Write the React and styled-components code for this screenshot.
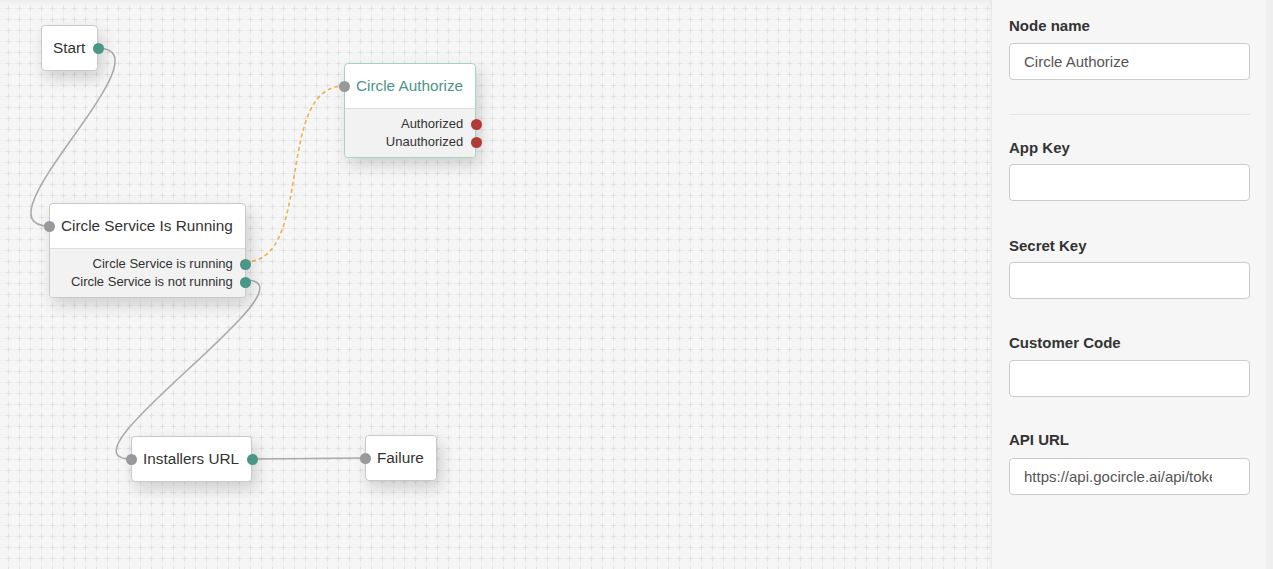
import React from 'react'
import styled, { createGlobalStyle } from 'styled-components'

const GlobalStyle = createGlobalStyle`
  html, body {
    margin: 0;
    padding: 0;
    height: 100%;
    overflow: hidden;
  }
  body {
    font-family: "Liberation Sans", Arial, sans-serif;
    color: #333;
  }
`

const Layout = styled.div`
  display: flex;
  width: 100vw;
  height: 100vh;
`

const Canvas = styled.div`
  position: relative;
  flex: 1;
  overflow: hidden;
  background: #f6f6f6;
  box-shadow: inset 0 8px 8px -8px rgba(0, 0, 0, 0.08);
`

const Layer = styled.svg`
  position: absolute;
  top: 0;
  left: 0;
  width: 100%;
  height: 100%;
  pointer-events: none;
`

const Node = styled.div`
  position: absolute;
  background: #fff;
  border: 1px solid ${(p) => (p.selected ? '#a3d3c8' : '#c9c9c9')};
  border-radius: 4px;
  box-shadow: 4px 7px 16px rgba(0, 0, 0, 0.16);
  white-space: nowrap;
`

const Header = styled.div`
  position: relative;
  display: flex;
  align-items: center;
  height: 43px;
  padding: 0 12px 1px 11px;
  font-size: 15.3px;
  color: ${(p) => (p.selected ? '#4a9687' : '#333')};
`

const Outputs = styled.div`
  border-top: 1px solid #dedede;
  background: #f2f2f2;
  padding: 6px 0 6px;
  border-radius: 0 0 4px 4px;
`

const OutRow = styled.div`
  position: relative;
  height: 18px;
  line-height: 18px;
  padding-right: 12px;
  text-align: right;
  font-size: 13px;
  color: #333;
`

const Port = styled.span`
  position: absolute;
  top: 50%;
  width: 11px;
  height: 11px;
  margin-top: -5.5px;
  border-radius: 50%;
  background: ${(p) => p.color};
  ${(p) => (p.side === 'left' ? 'left: -6.5px;' : 'right: -6.5px;')}
`

const Panel = styled.aside`
  display: flex;
  width: 281px;
  background: #f6f6f6;
  box-shadow: -1px 0 3px rgba(0, 0, 0, 0.08);
  z-index: 1;
`

const PanelBody = styled.div`
  flex: 1;
  padding: 16px 16px 0 17px;
`

const ScrollStrip = styled.div`
  width: 7px;
  background: #efefef;
`

const Field = styled.div`
  margin-bottom: ${(p) => p.gap || 35}px;
`

const Label = styled.div`
  font-size: 15px;
  font-weight: bold;
  line-height: 20px;
  color: #333;
  margin-bottom: ${(p) => p.space || 7}px;
`

const Input = styled.input`
  box-sizing: border-box;
  width: 241px;
  height: 37px;
  padding: 0 37px 0 14px;
  border: 1px solid #cbcbcb;
  border-radius: 4px;
  background: #fff;
  font-family: "Liberation Sans", Arial, sans-serif;
  font-size: 15px;
  color: #555;
  outline: none;
`

const Divider = styled.hr`
  border: 0;
  border-top: 1px solid #e6e6e6;
  width: 241px;
  margin: 0 0 23px 0;
`

const TEAL = '#4a9687'
const GREY = '#999'
const RED = '#b23a37'

function Grid() {
  return (
    <Layer>
      <defs>
        <pattern id="grid" x="3" y="3" width="11" height="11" patternUnits="userSpaceOnUse">
          <rect x="5" y="0" width="1" height="11" fill="#f0f0f0" />
          <rect x="0" y="5" width="11" height="1" fill="#f0f0f0" />
          <rect x="3" y="5" width="5" height="1" fill="#e1e1e1" />
          <rect x="5" y="3" width="1" height="5" fill="#e1e1e1" />
        </pattern>
      </defs>
      <rect width="100%" height="100%" fill="url(#grid)" />
    </Layer>
  )
}

// cubic curve leaving a port horizontally to the right and entering one from the left
function curve(x1, y1, x2, y2, k = 75) {
  return `M${x1} ${y1} C ${x1 + k} ${y1}, ${x2 - k} ${y2}, ${x2} ${y2}`
}

function Edges() {
  return (
    <Layer>
      <g fill="none" strokeWidth="1.6">
        <path d={curve(97, 48, 49, 226, 78)} stroke="#ababab" />
        <path d={curve(245, 262, 344, 86, 70)} stroke="#f0b04c" strokeDasharray="4 3" />
        <path d={curve(245, 280, 131, 459, 80)} stroke="#ababab" />
        <path d="M252 459 L 365 458" stroke="#ababab" />
      </g>
    </Layer>
  )
}

function FlowNode({ x, y, title, selected, input, output, outputs }) {
  return (
    <Node selected={selected} style={{ left: x, top: y }}>
      <Header selected={selected}>
        {input && <Port side="left" color={GREY} />}
        {title}
        {output && <Port side="right" color={output} />}
      </Header>
      {outputs && (
        <Outputs>
          {outputs.map((o) => (
            <OutRow key={o.label}>
              {o.label}
              <Port side="right" color={o.color} />
            </OutRow>
          ))}
        </Outputs>
      )}
    </Node>
  )
}

export default function App() {
  return (
    <>
      <GlobalStyle />
      <Layout>
        <Canvas>
          <Grid />
          <Edges />
          <FlowNode x={41} y={25} title="Start" output={TEAL} />
          <FlowNode
            x={344}
            y={63}
            title="Circle Authorize"
            selected
            input
            outputs={[
              { label: 'Authorized', color: RED },
              { label: 'Unauthorized', color: RED },
            ]}
          />
          <FlowNode
            x={49}
            y={203}
            title="Circle Service Is Running"
            input
            outputs={[
              { label: 'Circle Service is running', color: TEAL },
              { label: 'Circle Service is not running', color: TEAL },
            ]}
          />
          <FlowNode x={131} y={436} title="Installers URL" input output={TEAL} />
          <FlowNode x={365} y={435} title="Failure" input />
        </Canvas>
        <Panel>
          <PanelBody>
            <Field gap={34}>
              <Label>Node name</Label>
              <Input defaultValue="Circle Authorize" />
            </Field>
            <Divider />
            <Field>
              <Label space={6}>App Key</Label>
              <Input />
            </Field>
            <Field gap={34}>
              <Label space={6}>Secret Key</Label>
              <Input />
            </Field>
            <Field gap={33}>
              <Label space={7}>Customer Code</Label>
              <Input />
            </Field>
            <Field>
              <Label space={8}>API URL</Label>
              <Input defaultValue="https://api.gocircle.ai/api/token" />
            </Field>
          </PanelBody>
          <ScrollStrip />
        </Panel>
      </Layout>
    </>
  )
}
